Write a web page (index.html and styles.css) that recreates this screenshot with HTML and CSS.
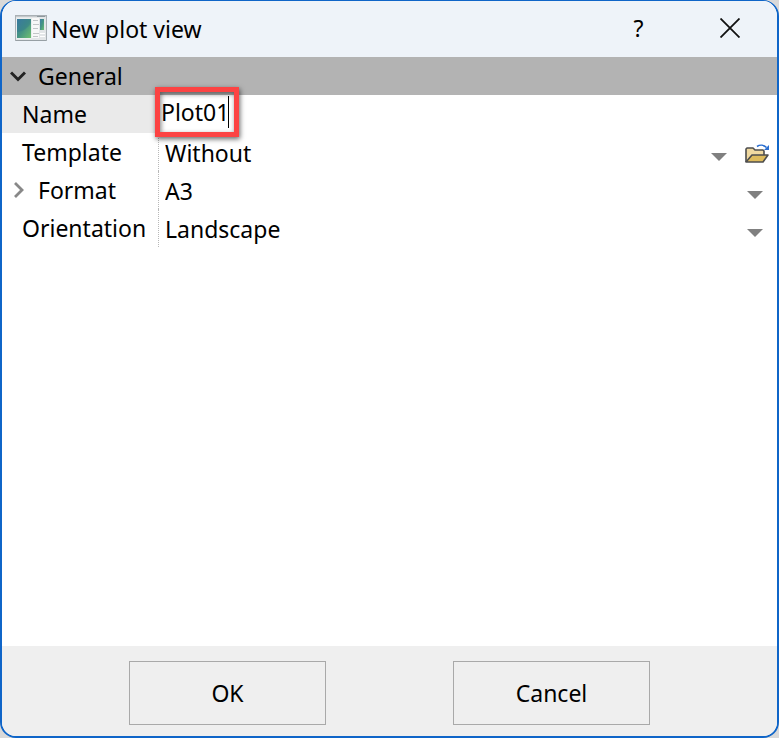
FILE: index.html
```html
<!DOCTYPE html>
<html lang="en">
<head>
    <meta charset="UTF-8">
    <meta name="viewport" content="width=device-width, initial-scale=1.0">
    <title>New plot view</title>
    <link rel="stylesheet" href="styles.css">
</head>
<body>
    <form class="dialog">
        <header class="titlebar">
            <svg class="app-icon" width="32" height="26" viewBox="0 0 32 26">
                <defs>
                    <linearGradient id="screen" x1="0" y1="0" x2="1" y2="1">
                        <stop offset="0" stop-color="#3f7fa6"/>
                        <stop offset="0.5" stop-color="#449384"/>
                        <stop offset="1" stop-color="#6fc070"/>
                    </linearGradient>
                </defs>
                <rect x="0.5" y="0.5" width="31" height="25" fill="#e3e6e8" stroke="#a9b0b5"/>
                <path d="M1 1.5h30" stroke="#c3c8cb"/>
                <path d="M22 1.5h8" stroke="#8d979d"/>
                <rect x="1.5" y="3.5" width="15" height="20" fill="#f4f6f6"/>
                <rect x="2" y="4" width="14" height="19" fill="url(#screen)"/>
                <path d="M2 17c5 0 11-4 14-9v-4H2z" fill="#2c6c92" opacity="0.3"/>
                <rect x="17" y="3" width="7" height="20" fill="#f8f8f8"/>
                <path d="M18 5.5h5M18 9.5h6M18 13.5h5M18 18.5h6M18 21.5h5" stroke="#c2c6c8"/>
                <rect x="25" y="4" width="4" height="11" fill="url(#screen)"/>
                <path d="M25 18.5h5M25 21.5h5" stroke="#fff"/>
                <path d="M1 25.5h30" stroke="#979fa4"/>
            </svg>
            <h1 class="title">New plot view</h1>
            <button class="title-button" type="button" aria-label="Help">?</button>
            <button class="title-button" type="button" aria-label="Close">
                <svg width="20" height="20" viewBox="0 0 20 20">
                    <path d="M0.5 0.5l19 19M19.5 0.5l-19 19" fill="none" stroke="#111" stroke-width="1.8"/>
                </svg>
            </button>
        </header>

        <main class="properties">
            <button class="group" type="button" aria-expanded="true">
                <svg class="chevron" width="16" height="16" viewBox="0 0 16 16">
                    <path d="M1 4.5l7 7 7-7" fill="none" stroke="#222" stroke-width="3"/>
                </svg>
                General
            </button>

            <div class="row selected">
                <label class="name" for="plot-name">Name</label>
                <div class="value editing">
                    <input class="text-box" id="plot-name" type="text" value="Plot01">
                </div>
            </div>

            <div class="row">
                <label class="name" for="template">Template</label>
                <div class="value">
                    <div class="picker">
                        <select id="template">
                            <option>Without</option>
                        </select>
                    </div>
                    <button class="open" type="button" aria-label="Open template">
                        <svg width="26" height="20" viewBox="0 0 26 20">
                            <path d="M2 18V5l1-1h6l2 2h8l1 1v4" fill="#f0d9a0" stroke="#4d4d4d" stroke-width="1.6" stroke-linejoin="round"/>
                            <path d="M2 18L8 11h16l-5 7z" fill="#debb5c" stroke="#4d4d4d" stroke-width="1.6" stroke-linejoin="round"/>
                            <path d="M13 2.5c3-2 7-1.5 9.500 1" fill="none" stroke="#2b6fd0" stroke-width="1.6"/>
                            <path d="M25 1v5h-5z" fill="#2b6fd0"/>
                        </svg>
                    </button>
                </div>
            </div>

            <div class="row">
                <div class="name">
                    <button class="expand" type="button" aria-label="Expand format">
                        <svg class="chevron" width="16" height="16" viewBox="0 0 16 16">
                            <path d="M5 1l7 7-7 7" fill="none" stroke="#888" stroke-width="2.8"/>
                        </svg>
                    </button>
                    <label for="format">Format</label>
                </div>
                <div class="value">
                    <div class="picker">
                        <select id="format">
                            <option>A3</option>
                        </select>
                    </div>
                </div>
            </div>

            <div class="row">
                <label class="name" for="orientation">Orientation</label>
                <div class="value">
                    <div class="picker">
                        <select id="orientation">
                            <option>Landscape</option>
                        </select>
                    </div>
                </div>
            </div>
        </main>

        <footer class="actions">
            <button class="action" type="submit">OK</button>
            <button class="action" type="button">Cancel</button>
        </footer>
    </form>
</body>
</html>
```

FILE: styles.css
```css
*, *::before, *::after {
    box-sizing: border-box;
}

body {
    margin: 0;
    background: #d9d9d9;
    font-family: "Noto Sans", "Open Sans", sans-serif;
    font-size: 23px;
    line-height: 32px;
    color: #000;
}

button, input, select {
    margin: 0;
    padding: 0;
    border: none;
    background: none;
    font: inherit;
    color: inherit;
}

svg {
    display: block;
}

.dialog {
    display: flex;
    flex-direction: column;
    min-height: 100vh;
    border: 2px solid #0f65c8;
    border-top-width: 1px;
    border-radius: 16px;
    overflow: hidden;
    background: #fff;
}

/* title bar */
.titlebar {
    display: flex;
    align-items: center;
    height: 56px;
    padding: 0 2px 2px 13px;
    background: #eef3f9;
}

.title {
    flex: 1;
    margin: 2px 0 0 4px;
    font-size: 23px;
    font-weight: 400;
}

.title-button {
    display: flex;
    align-items: center;
    justify-content: center;
    width: 91px;
    height: 54px;
}

/* property grid */
.properties {
    flex: 1;
}

.group {
    display: flex;
    align-items: center;
    gap: 12px;
    width: 100%;
    height: 38px;
    padding: 0 8px;
    background: #b3b3b3;
    text-align: left;
}

.row {
    display: grid;
    grid-template-columns: 156px 1fr;
    height: 38px;
}

.name {
    display: flex;
    align-items: center;
    padding-left: 20px;
}

.selected .name {
    background: #eaeaea;
}

.expand {
    margin: 0 12px 0 -12px;
}

.value {
    display: flex;
    align-items: center;
    padding: 2px 7px 0 6px;
    border-left: 1px dotted #b8b8b8;
}

.editing {
    position: relative;
    padding: 0 0 4px 2px;
    border-left-color: transparent;
}

.text-box {
    width: 68px;
    height: 32px;
    border-right: 1px solid #000;
    outline: none;
}

.editing::after {
    content: "";
    position: absolute;
    top: -8px;
    left: -4px;
    width: 84px;
    height: 50px;
    border: 5px solid #fc4343;
    box-shadow: 1px 2px 5px rgba(0, 0, 0, 0.6), inset 1px 2px 5px rgba(0, 0, 0, 0.5);
    pointer-events: none;
}

.picker {
    display: flex;
    flex: 1;
    align-items: center;
    padding-right: 7px;
}

.picker select {
    flex: 1;
    appearance: none;
    outline: none;
}

.picker::after {
    content: "";
    margin-top: 8px;
    border: 8px solid transparent;
    border-top-color: #808080;
    border-bottom-width: 0;
    pointer-events: none;
}

.open {
    margin: 2px 0 0 10px;
}

/* buttons */
.actions {
    display: flex;
    justify-content: space-evenly;
    padding: 15px 0 11px;
    background: #efefef;
}

.action {
    width: 197px;
    height: 64px;
    border: 1px solid #a9a9a9;
}
```
